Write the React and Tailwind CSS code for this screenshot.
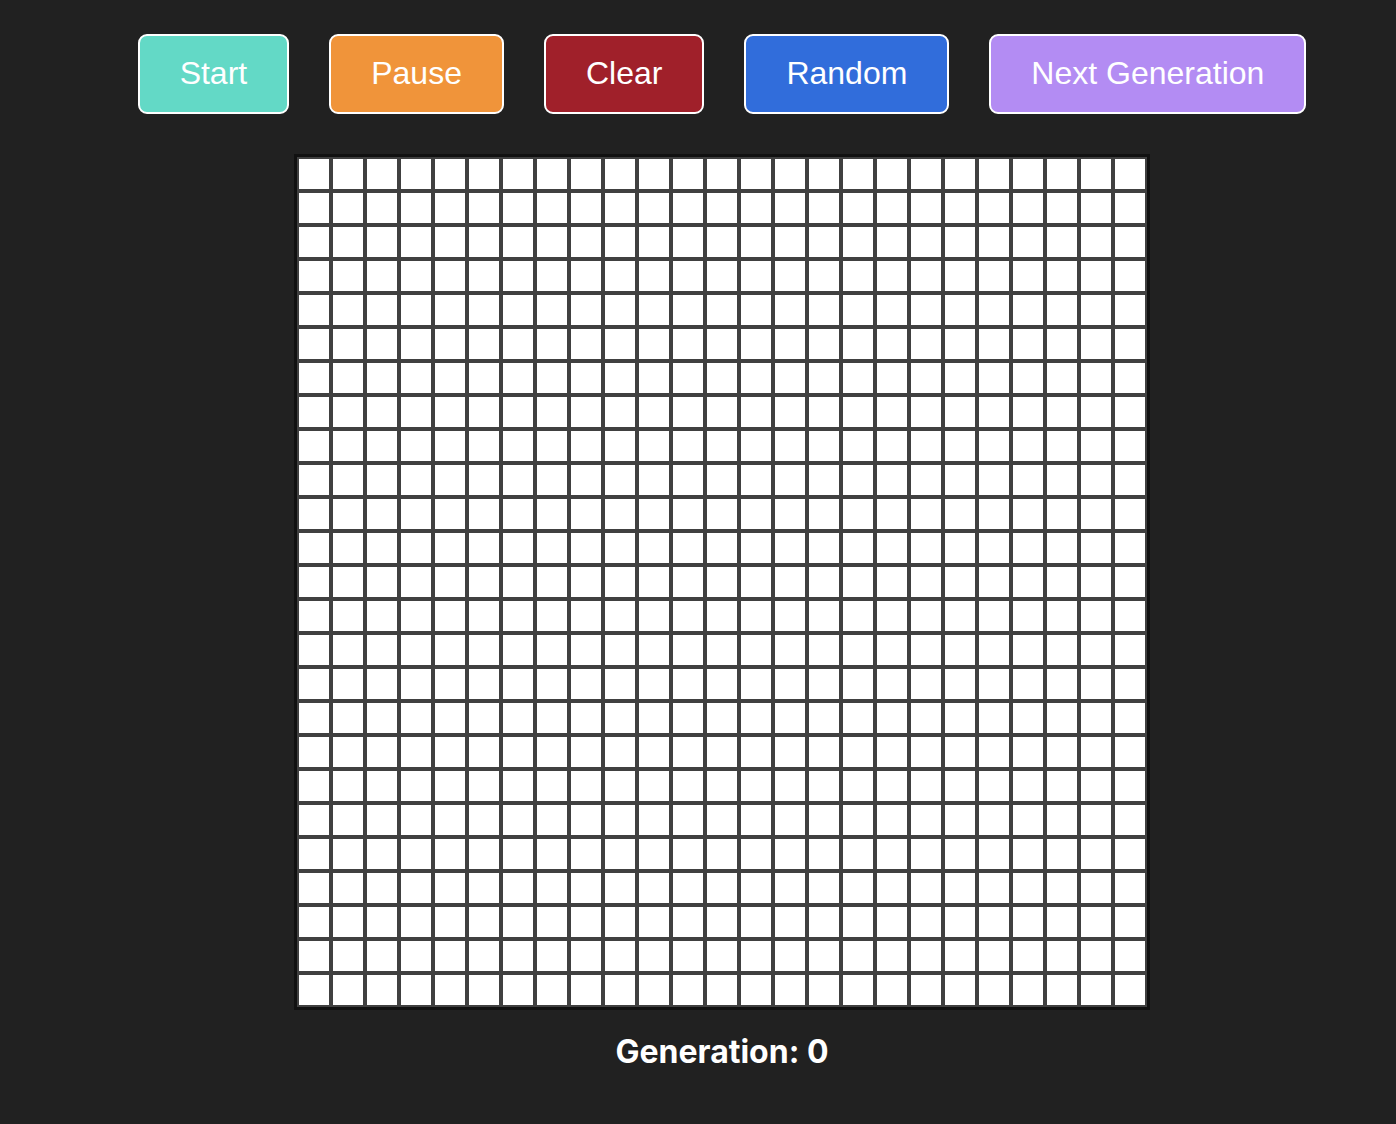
import { useState } from 'react';

const ROWS = 25;
const COLS = 25;

const buttons = [
  { label: 'Start', color: 'bg-[#63d9c6]' },
  { label: 'Pause', color: 'bg-[#f0943a]' },
  { label: 'Clear', color: 'bg-[#a0202a]' },
  { label: 'Random', color: 'bg-[#316ddb]' },
  { label: 'Next Generation', color: 'bg-[#b38cf3]' },
];

export default function App() {
  const [grid] = useState(() => Array.from({ length: ROWS }, () => Array(COLS).fill(0)));
  const [generation] = useState(0);

  return (
    <div className="min-h-screen bg-[#212121] pl-[48px] pt-[34px] pb-10" style={{ fontFamily: '"Liberation Sans", Arial, sans-serif' }}>
      <div className="flex justify-center gap-10">
        {buttons.map((b) => (
          <button
            key={b.label}
            className={`${b.color} h-[80px] px-10 pb-[2px] border-2 border-white rounded-[9px] text-white text-[32px] leading-none flex items-center`}
          >
            {b.label}
          </button>
        ))}
      </div>

      <div className="flex justify-center mt-10">
        <div className="grid grid-cols-[repeat(25,34px)] border-[3px] border-[#111111] -ml-[1px]">
          {grid.map((row, r) =>
            row.map((cell, c) => (
              <div
                key={`${r}-${c}`}
                className={`w-[34px] h-[34px] border-2 border-[#404040] ${cell ? 'bg-black' : 'bg-white'}`}
              />
            ))
          )}
        </div>
      </div>

      <p
        className="mt-[18px] text-center text-white font-bold text-[32px]"
        style={{ fontFamily: 'Inter, "Noto Sans", sans-serif' }}
      >
        Generation: {generation}
      </p>
    </div>
  );
}
